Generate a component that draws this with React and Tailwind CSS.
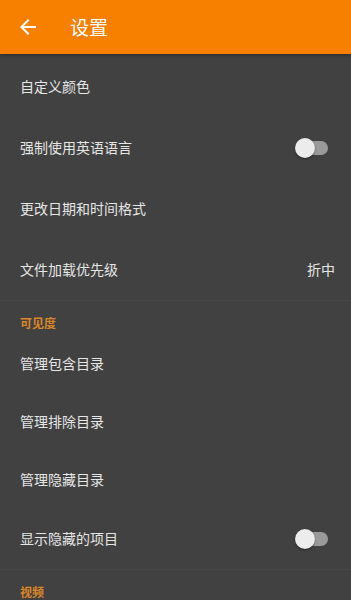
import React, { useState } from 'react';

const font = { fontFamily: '"Noto Sans CJK SC", "Noto Sans", sans-serif' };

function Toggle({ on, onChange }) {
  return (
    <button onClick={onChange} className="relative w-[34px] h-[22px] flex items-center">
      <span className={`absolute left-[2px] right-[1px] h-[14px] rounded-full ${on ? 'bg-[#c96f10]' : 'bg-[#9a9a9a]'}`} />
      <span
        className={`absolute w-[20px] h-[20px] rounded-full shadow-[0_1px_2px_rgba(0,0,0,0.5)] ${on ? 'left-[13px] bg-[#f88000]' : 'left-0 bg-[#ececec]'}`}
      />
    </button>
  );
}

function Row({ label, value, toggle, on, onToggle, tall = true }) {
  return (
    <div className={`flex items-center justify-between pl-5 pr-4 ${tall ? 'h-[61px]' : 'h-[58px]'}`}>
      <span className="text-[14px] text-[#e6e6e6]">{label}</span>
      {value && <span className="text-[14px] text-[#e6e6e6]">{value}</span>}
      {toggle && (
        <div className="pr-[6px]">
          <Toggle on={on} onChange={onToggle} />
        </div>
      )}
    </div>
  );
}

function SectionTitle({ children }) {
  return (
    <div className="pl-5 pt-[14px] pb-[3px] text-[12px] leading-4 font-bold text-[#dc862a]">
      {children}
    </div>
  );
}

export default function App() {
  const [english, setEnglish] = useState(false);
  const [hidden, setHidden] = useState(false);

  return (
    <div className="w-[351px] h-[600px] overflow-hidden bg-[#414141] flex flex-col" style={font}>
      {/* Toolbar */}
      <div className="h-[54px] shrink-0 bg-[#f88000] flex items-center shadow-[0_1px_3px_rgba(0,0,0,0.4)]">
        <button className="ml-4 w-6 h-6 flex items-center justify-center">
          <svg width="24" height="24" viewBox="0 0 24 24" fill="#ffffff">
            <path d="M20 11H7.83l5.59-5.59L12 4l-8 8 8 8 1.41-1.41L7.83 13H20v-2z" />
          </svg>
        </button>
        <span className="ml-[30px] text-[19px] text-white">设置</span>
      </div>

      <div className="pt-[2px]">
        <Row label="自定义颜色" />
        <Row label="强制使用英语语言" toggle on={english} onToggle={() => setEnglish(!english)} />
        <Row label="更改日期和时间格式" />
        <Row label="文件加载优先级" value="折中" />
      </div>

      <div className="border-t border-[#474747]">
        <SectionTitle>可见度</SectionTitle>
        <Row label="管理包含目录" tall={false} />
        <Row label="管理排除目录" tall={false} />
        <Row label="管理隐藏目录" tall={false} />
        <Row label="显示隐藏的项目" toggle on={hidden} onToggle={() => setHidden(!hidden)} />
      </div>

      <div className="border-t border-[#474747]">
        <SectionTitle>视频</SectionTitle>
      </div>
    </div>
  );
}
